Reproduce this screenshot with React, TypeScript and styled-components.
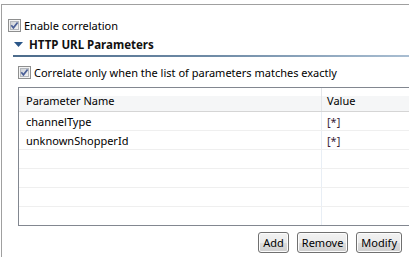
import React from "react";
import styled, { createGlobalStyle } from "styled-components";

const GlobalStyle = createGlobalStyle`
  html, body { margin: 0; padding: 0; background: #ffffff; }
  body {
    width: 409px;
    height: 257px;
    overflow: hidden;
    font-family: "Noto Sans", "Open Sans", sans-serif;
    font-size: 11px;
    color: #000000;
  }
`;

const Frame = styled.div`
  margin: 4px 0 0 1px;
  height: 253px;
  box-sizing: border-box;
  border-top: 1px solid #a0a0a0;
  border-left: 1px solid #a0a0a0;
  padding: 14px 0 0 6px;
  display: flex;
  flex-direction: column;
`;

const CheckRow = styled.label`
  display: flex;
  align-items: center;
  gap: 3px;
  height: 13px;
  line-height: 13px;
  white-space: nowrap;
`;

const Section = styled.div`
  margin: 5px 0 0 5px;
  display: flex;
  flex-direction: column;
`;

const SectionHeader = styled.div`
  display: flex;
  align-items: center;
  gap: 6px;
  height: 14px;
  padding: 0 0 0 1px;
  font-weight: 700;
  font-size: 11.5px;
  color: #111111;
`;

const Rule = styled.div`
  margin-top: 4px;
  height: 2px;
  background: linear-gradient(to right, #4c6b8b 0%, #6f8ba6 50%, #a9bed2 100%);
`;

const SectionBody = styled.div`
  padding: 9px 0 0 5px;
  display: flex;
  flex-direction: column;
`;

const Table = styled.div`
  margin-top: 8px;
  border: 1px solid #828790;
  border-right: none;
  display: flex;
  flex-direction: column;
`;

const HeaderRow = styled.div`
  display: flex;
  height: 24px;
  box-sizing: border-box;
  border-bottom: 1px solid #d5d5d5;
  background: linear-gradient(to bottom, #ffffff 0, #ffffff 8px, #f5f6f7 8px, #f5f6f7 100%);
`;

const Row = styled.div<{ $last?: boolean }>`
  display: flex;
  height: ${(p) => (p.$last ? 18 : 19)}px;
  box-sizing: border-box;
  border-bottom: ${(p) => (p.$last ? "none" : "1px solid #efefef")};
`;

const Cell = styled.div<{ $first?: boolean; $header?: boolean }>`
  box-sizing: border-box;
  width: ${(p) => (p.$first ? "303px" : "auto")};
  flex: ${(p) => (p.$first ? "none" : "1")};
  border-right: ${(p) => (p.$first ? `1px solid ${p.$header ? "#e4e6e9" : "#e8eef5"}` : "none")};
  padding-left: ${(p) => (p.$first ? 7 : 5)}px;
  display: flex;
  align-items: center;
  padding-top: ${(p) => (p.$header ? 2 : 0)}px;
  white-space: nowrap;
`;

const Wildcard = styled.span`
  color: #3a1f3a;
`;

const ButtonBar = styled.div`
  display: flex;
  justify-content: flex-end;
  gap: 8px;
  margin-top: 6px;
  padding-right: 7px;
`;

const Button = styled.button`
  height: 21px;
  padding: 0 4px;
  font-family: "Noto Sans", "Open Sans", sans-serif;
  font-size: 11px;
  color: #000000;
  border: 1px solid #707070;
  border-radius: 3px;
  background: linear-gradient(to bottom, #f2f2f2 0%, #ebebeb 50%, #dddddd 51%, #cfcfcf 100%);
  box-shadow: inset 0 0 0 1px #fcfcfc;
  line-height: 17px;
`;

const CheckBox: React.FC = () => (
  <svg width="13" height="13" viewBox="0 0 13 13">
    <defs>
      <linearGradient id="cbg" x1="0" y1="0" x2="1" y2="1">
        <stop offset="0" stopColor="#cbcfd5" />
        <stop offset="1" stopColor="#f6f6f6" />
      </linearGradient>
    </defs>
    <rect x="0.5" y="0.5" width="12" height="12" fill="#f4f4f4" stroke="#8e8f8f" />
    <rect x="2.5" y="2.5" width="8" height="8" fill="url(#cbg)" stroke="#b3b7bd" />
    <path d="M3.3 6.3 L5.4 8.8 L9.6 3.4" fill="none" stroke="#4a5f97" strokeWidth="1.7" />
  </svg>
);

const Triangle: React.FC = () => (
  <svg width="9" height="5" viewBox="0 0 9 5">
    <polygon points="0,0 9,0 4.5,5" fill="#2a5688" />
  </svg>
);

const rows = [
  { name: "channelType", value: "[*]" },
  { name: "unknownShopperId", value: "[*]" },
  { name: "", value: "" },
  { name: "", value: "" },
  { name: "", value: "" },
  { name: "", value: "" },
];

export default function App() {
  return (
    <>
      <GlobalStyle />
      <Frame>
        <CheckRow>
          <CheckBox />
          <span>Enable correlation</span>
        </CheckRow>
        <Section>
          <SectionHeader>
            <Triangle />
            <span>HTTP URL Parameters</span>
          </SectionHeader>
          <Rule />
          <SectionBody>
            <CheckRow>
              <CheckBox />
              <span>Correlate only when the list of parameters matches exactly</span>
            </CheckRow>
            <Table>
              <HeaderRow>
                <Cell $first $header>Parameter Name</Cell>
                <Cell $header>Value</Cell>
              </HeaderRow>
              {rows.map((r, i) => (
                <Row key={i} $last={i === rows.length - 1}>
                  <Cell $first>{r.name}</Cell>
                  <Cell>
                    <Wildcard>{r.value}</Wildcard>
                  </Cell>
                </Row>
              ))}
            </Table>
            <ButtonBar>
              <Button>Add</Button>
              <Button>Remove</Button>
              <Button>Modify</Button>
            </ButtonBar>
          </SectionBody>
        </Section>
      </Frame>
    </>
  );
}
